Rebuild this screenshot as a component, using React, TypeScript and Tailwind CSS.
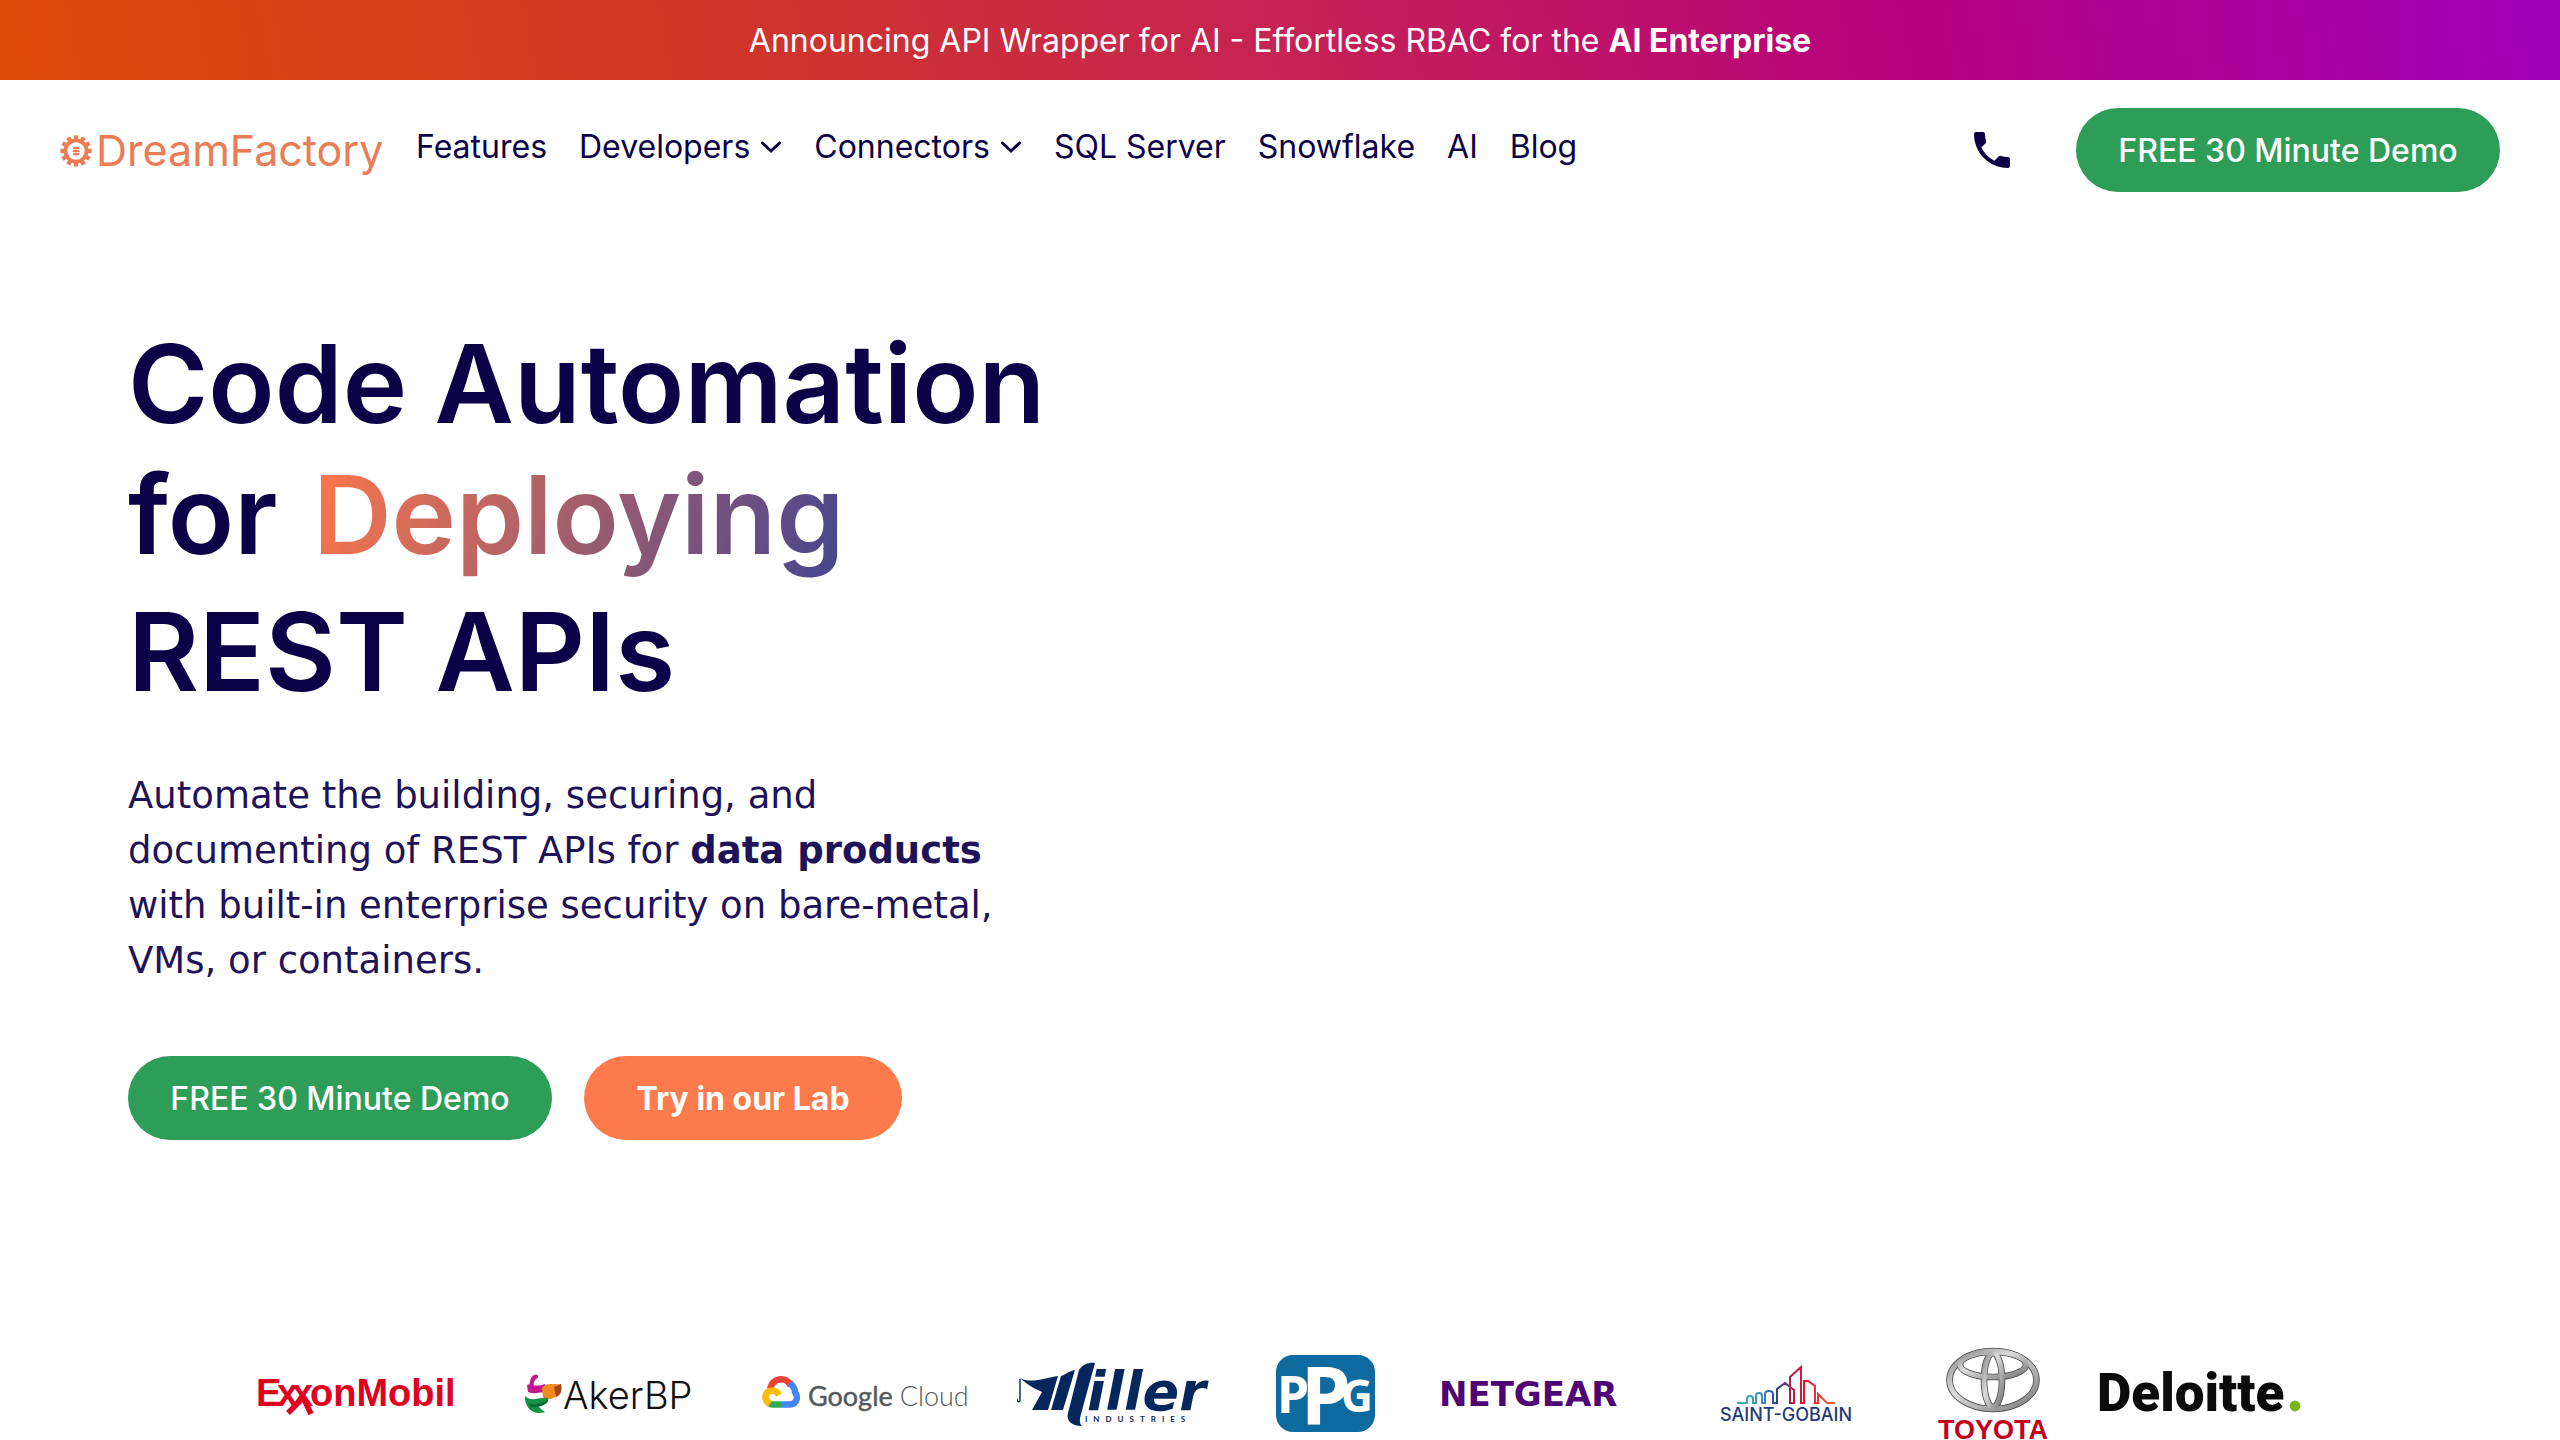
import type { ReactNode } from "react";
import { MdPhone } from "react-icons/md";

const navItems = [
  { label: "Features" },
  { label: "Developers", menu: true },
  { label: "Connectors", menu: true },
  { label: "SQL Server" },
  { label: "Snowflake" },
  { label: "AI" },
  { label: "Blog" },
];

const TEETH = [0, 30, 60, 90, 120, 150, 180, 210, 240, 270, 300, 330];

const DreamFactoryLogo = () => (
  <svg viewBox="0 0 324 56" className="h-14 w-81" role="img" aria-label="DreamFactory">
    <g fill="none" stroke="#e97d56">
      <circle cx="16" cy="29" r="10.6" strokeWidth="3.8" />
      {TEETH.map((angle) => (
        <path key={angle} d="M16 13.4v5" strokeWidth="4.4" transform={`rotate(${angle} 16 29)`} />
      ))}
    </g>
    <g fill="#e97d56">
      <rect x="13" y="25" width="6.4" height="2.2" rx="1" />
      <rect x="12.6" y="28" width="7" height="2.2" rx="1" />
      <rect x="13" y="31" width="6.4" height="2.2" rx="1" />
    </g>
    <text x="36" y="44" fontSize="43" fill="#e97d56" className="font-['Inter',sans-serif]">
      DreamFactory
    </text>
  </svg>
);

const Chevron = () => (
  <svg viewBox="0 0 24 24" className="size-6" fill="none" stroke="currentColor" strokeWidth="3" aria-hidden="true">
    <path d="M4.5 8 L13 16 L21.5 8" strokeLinecap="round" />
  </svg>
);

const Pill = ({ className, children }: { className: string; children: ReactNode }) => (
  <button className={`flex h-21 items-center justify-center rounded-full text-[32px] text-white ${className}`}>
    {children}
  </button>
);

const ExxonMobil = () => (
  <svg viewBox="0 0 200 94" className="h-[94px] w-[200px]" role="img" aria-label="ExxonMobil">
    <g fontSize="38" fontWeight="700" fill="#e0001f" className="font-['Liberation_Sans',sans-serif]">
      <text x="-1" y="60">E</text>
      <text x="20" y="60">x</text>
      <text x="35" y="60">x</text>
      <text x="53" y="60">onMobil</text>
    </g>
    <path d="M46 51 L54 68 M44 54 L31 67" stroke="#e0001f" strokeWidth="5.5" fill="none" />
  </svg>
);

const AkerBP = () => (
  <svg viewBox="0 0 208 94" className="h-[94px] w-[208px]" role="img" aria-label="AkerBP">
    <path d="M25 45 C24 37 25 31 29 29 C33 27 35 31 31 33 C28 36 28 41 30 45Z" fill="#c2188b" />
    <path d="M22 39 C26 37 29 42 40 38 L41 47 C34 45 29 49 23 46Z" fill="#c2188b" />
    <path d="M37 42 C42 36 50 39 56 38 C57 44 56 50 50 51 C46 54 40 54 38 51Z" fill="#ef8b1d" />
    <path d="M49 41 L56 38 C57 45 56 49 51 51Z" fill="#a5441a" />
    <path d="M20 50 C27 57 34 50 43 52 C45 57 38 60 33 60 C37 64 39 65 40 66 C29 70 19 62 20 50Z" fill="#159447" />
    <path d="M23 57 C29 60 36 57 43 54 C41 60 31 62 26 61Z" fill="#0b6a34" />
    <text x="58" y="63" fontSize="38" fontWeight="300" fill="#111" className="font-['Inter',sans-serif]">
      AkerBP
    </text>
  </svg>
);

const GoogleCloud = () => (
  <svg viewBox="0 0 208 94" className="h-[94px] w-[208px]" role="img" aria-label="Google Cloud">
    <g fill="none" strokeWidth="6.5">
      <path d="M9 43 C12 31 26 30 30 40" stroke="#ea4335" />
      <path d="M29 37 C33 41 34 44 34 46 C38 52 35 58.5 29 58.5 H20" stroke="#4285f4" />
      <path d="M20 58.5 H12 C10 58.5 9 58 7.5 57" stroke="#34a853" />
      <path d="M9 58 C1 53 5 44.5 11 44.5 C15 44.5 17 47 18 49" stroke="#fbbc05" />
    </g>
    <text x="47" y="60" fontSize="27" fill="#55585b" className="font-['Lato',sans-serif]">
      <tspan stroke="#55585b" strokeWidth="0.4">Google</tspan> <tspan fontWeight="300">Cloud</tspan>
    </text>
  </svg>
);

const Miller = () => (
  <svg viewBox="0 0 200 94" className="h-[94px] w-[200px]" role="img" aria-label="Miller Industries">
    <g fill="#05275c">
      <path d="M3 32 C14 38 28 32 41 30 L31 64 H15 L25 46 C20 43 14 42 3 32Z" />
      <path d="M44 30 C48 29 52 25 58 24 L46 64 H34Z" />
      <path d="M62 24 C66 18 72 16 78 17 L64 68 C62 75 63 78 65 80 C54 80 49 74 51 67Z" />
      <path d="M3 33 V54 C3 57 0 56 0 53" fill="none" stroke="#05275c" strokeWidth="1.4" />
      <text x="70" y="64" fontSize="54" fontWeight="700" fontStyle="italic" className="font-['DejaVu_Sans',sans-serif]">
        iller
      </text>
      <text x="68" y="76" fontSize="8" fontWeight="700" className="font-['Lato',sans-serif] tracking-[0.75em]">
        INDUSTRIES
      </text>
    </g>
  </svg>
);

const PPG = () => (
  <svg viewBox="0 0 120 94" className="h-[94px] w-[120px]" role="img" aria-label="PPG">
    <rect x="11" y="9" width="99" height="77" rx="17" fill="#0e6a9f" />
    <g fill="#fff" fontWeight="700" className="font-['Noto_Sans',sans-serif]">
      <text x="12" y="67" fontSize="52">P</text>
      <text x="36" y="78" fontSize="80">P</text>
      <text x="76" y="66" fontSize="44">G</text>
    </g>
  </svg>
);

const Netgear = () => (
  <svg viewBox="0 0 192 94" className="h-[94px] w-[192px]" role="img" aria-label="NETGEAR">
    <text x="6" y="60" fontSize="34" fontWeight="700" fill="#4f0574" className="font-['DejaVu_Sans',sans-serif]">
      NETGEAR
    </text>
  </svg>
);

const SaintGobain = () => (
  <svg viewBox="0 0 216 94" className="h-[94px] w-[216px]" role="img" aria-label="Saint-Gobain">
    <defs>
      <linearGradient id="skyline" gradientUnits="userSpaceOnUse" x1="64" y1="0" x2="162" y2="0">
        <stop offset="0" stopColor="#3bb5a5" />
        <stop offset="0.25" stopColor="#3a8fc4" />
        <stop offset="0.42" stopColor="#2a3f86" />
        <stop offset="0.56" stopColor="#b51e45" />
        <stop offset="0.7" stopColor="#e2152b" />
        <stop offset="1" stopColor="#ee6a3a" />
      </linearGradient>
    </defs>
    <path
      d="M64 57 H74 V53 C74 49 80 49 80 53 V57 H83 V50 C83 46 89 46 89 50 V57 H92 V48 C92 44 100 44 100 48 V57 H104 V43 L112 37 L121 44 V57 H117 V31 L128 21 V57 H131 V35 H135 L142 40 V57 H145 V48 L154 57 H162"
      fill="none"
      stroke="url(#skyline)"
      strokeWidth="2"
    />
    <text x="47" y="75" fontSize="18" fontWeight="500" fill="#1f3a7a" className="font-['Inter',sans-serif]">
      SAINT-GOBAIN
    </text>
  </svg>
);

const Toyota = () => (
  <svg viewBox="0 0 112 94" className="h-[94px] w-[112px]" role="img" aria-label="Toyota">
    <defs>
      <linearGradient id="chrome" x1="0" y1="0" x2="1" y2="1">
        <stop offset="0" stopColor="#8b8b8b" />
        <stop offset="0.4" stopColor="#dcdcdc" />
        <stop offset="1" stopColor="#777" />
      </linearGradient>
    </defs>
    <g fill="none" stroke="#4c4c4c" strokeWidth="6.6">
      <ellipse cx="56" cy="34" rx="43.5" ry="29" />
      <ellipse cx="56" cy="18.5" rx="33" ry="12.5" />
      <ellipse cx="56" cy="34" rx="9" ry="27" />
    </g>
    <g fill="none" stroke="url(#chrome)" strokeWidth="5">
      <ellipse cx="56" cy="34" rx="43.5" ry="29" />
      <ellipse cx="56" cy="18.5" rx="33" ry="12.5" />
      <ellipse cx="56" cy="34" rx="9" ry="27" />
    </g>
    <text x="1" y="93" fontSize="27" fontWeight="700" fill="#c4001f" className="font-['Liberation_Sans',sans-serif]">
      TOYOTA
    </text>
  </svg>
);

const Deloitte = () => (
  <svg viewBox="0 0 206 94" className="h-[94px] w-[206px]" role="img" aria-label="Deloitte">
    <text x="0" y="65" fontSize="53" fontWeight="900" fill="#0b0b0b" className="font-['Roboto',sans-serif]">
      Deloitte
    </text>
    <circle cx="198" cy="60" r="5.4" fill="#7ab51d" />
  </svg>
);

const App = () => {
  return (
    <div className="bg-white font-['Inter',sans-serif] text-[#0b0147]">
      <a
        href="#announcement"
        className="flex h-20 items-center justify-center bg-[linear-gradient(80deg,#de4a08,#d03628_28%,#c52353_50%,#b5007f_75%,#9f00b8)] pt-0.5 text-[32px] text-white"
      >
        <p>
          Announcing API Wrapper for AI - Effortless RBAC for the <strong>AI Enterprise</strong>
        </p>
      </a>

      <header className="flex items-center justify-between px-15 py-7">
        <div className="flex items-center gap-8">
          <a href="#home">
            <DreamFactoryLogo />
          </a>
          <nav className="flex items-center gap-8 pb-1.5 text-[32px] leading-12">
            {navItems.map((item) => (
              <a key={item.label} href="#nav" className="flex items-center gap-2">
                {item.label}
                {item.menu && <Chevron />}
              </a>
            ))}
          </nav>
        </div>
        <div className="flex items-center gap-15">
          <a href="#call" aria-label="Call us">
            <MdPhone size={48} />
          </a>
          <Pill className="w-106 bg-[#2e9d58] pt-0.5 font-medium">FREE 30 Minute Demo</Pill>
        </div>
      </header>

      <main>
        <section className="px-32 pt-24">
          <h1 className="text-[109px] leading-[134px] font-semibold">
            <span className="block">Code Automation</span>
            <span className="block pb-1.5 leading-[128px]">
              for{" "}
              <span className="ml-2 bg-[linear-gradient(110deg,#ff774a,#444590)] bg-clip-text text-transparent">
                Deploying
              </span>
            </span>
            <span className="block">REST APIs</span>
          </h1>
          <p className="mt-12 max-w-[900px] pt-0.5 font-['DejaVu_Sans',sans-serif] text-[37px] leading-[55px] text-[#1e1259]">
            Automate the building, securing, and documenting of REST APIs for <strong>data products</strong> with
            built-in enterprise security on bare-metal, VMs, or containers.
          </p>
          <div className="mt-17 flex gap-8">
            <Pill className="w-106 bg-[#2e9d58] pt-0.5 font-medium">FREE 30 Minute Demo</Pill>
            <Pill className="w-[318px] bg-[#fd7a4c] pt-0.5 font-bold">Try in our Lab</Pill>
          </div>
        </section>

        <section className="mt-[206px] flex items-center justify-center gap-12">
          <ExxonMobil />
          <AkerBP />
          <GoogleCloud />
          <Miller />
          <PPG />
          <Netgear />
          <SaintGobain />
          <Toyota />
          <Deloitte />
        </section>
      </main>
    </div>
  );
};

export default App;
